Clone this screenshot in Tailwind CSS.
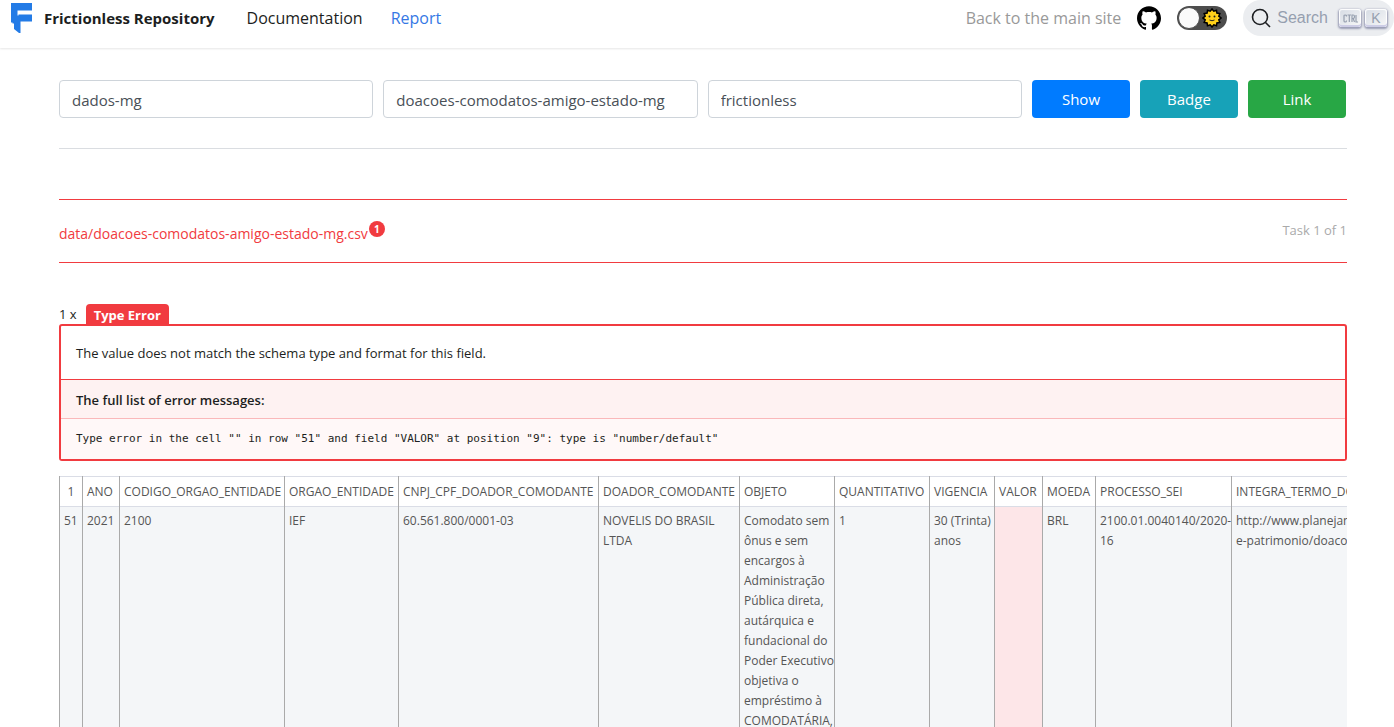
<!DOCTYPE html>
<html lang="en">
<head>
<meta charset="utf-8">
<meta name="viewport" content="width=device-width, initial-scale=1">
<title>Report | Frictionless Repository</title>
<script src="https://cdn.jsdelivr.net/npm/@tailwindcss/browser@4"></script>
</head>
<body class="bg-white font-['Segoe_UI','Open_Sans',sans-serif] text-[#1c1e21]">
<header class="flex h-12 items-center pb-3 pl-[10px] text-base shadow-[0_1px_2px_rgba(0,0,0,0.1)]">
  <a href="#" class="mr-8 flex items-center gap-3 text-[15px] font-bold">
    <svg class="h-[30px] w-[22px]" viewBox="0 0 22 30" fill="#237be6" aria-hidden="true"><path d="M1 0H22V7.500H7.500V12.500H8.500V11.500H22V18.500H10.500V30H9L4 26V20.500H2.500V19.500H1Z"/></svg>
    <span>Frictionless Repository</span>
  </a>
  <nav class="flex gap-7">
    <a href="#">Documentation</a>
    <a href="#" class="text-[#3578e5]">Report</a>
  </nav>
  <div class="ml-auto flex items-center">
    <a href="#" class="mr-4 text-[#999999]">Back to the main site</a>
    <a href="#" aria-label="GitHub" class="mr-4">
      <svg class="size-6" viewBox="0 0 24 24" fill="#000"><path d="M12 .297c-6.630 0-12 5.373-12 12 0 5.303 3.438 9.800 8.205 11.385.6.113.82-.258.82-.577 0-.285-.010-1.040-.015-2.040-3.338.724-4.042-1.610-4.042-1.610C4.422 18.070 3.633 17.700 3.633 17.700c-1.087-.744.084-.729.084-.729 1.205.084 1.838 1.236 1.838 1.236 1.070 1.835 2.809 1.305 3.495.998.108-.776.417-1.305.76-1.605-2.665-.3-5.466-1.332-5.466-5.930 0-1.310.465-2.380 1.235-3.220-.135-.303-.54-1.523.105-3.176 0 0 1.005-.322 3.300 1.230.96-.267 1.980-.399 3-.405 1.020.006 2.040.138 3 .405 2.280-1.552 3.285-1.230 3.285-1.230.645 1.653.24 2.873.12 3.176.765.84 1.230 1.910 1.230 3.220 0 4.610-2.805 5.625-5.475 5.920.42.36.81 1.096.81 2.220 0 1.606-.015 2.896-.015 3.286 0 .315.21.69.825.57C20.565 22.092 24 17.592 24 12.297c0-6.627-5.373-12-12-12"/></svg>
    </a>
    <button type="button" aria-label="Switch theme" class="mr-4 flex h-6 w-[50px] items-center justify-between rounded-full bg-[#4d4d4d] px-px">
      <span class="size-[22px] rounded-full border border-[#4d4d4d] bg-[#fafafa]"></span>
      <svg class="mr-1 size-5" viewBox="0 0 20 20" aria-hidden="true"><path d="M10 1L11.800 3.200L14.500 2.200L14.900 5.100L17.800 5.500L16.800 8.200L19 10L16.800 11.800L17.800 14.500L14.900 14.900L14.500 17.800L11.800 16.800L10 19L8.200 16.800L5.500 17.800L5.100 14.900L2.200 14.500L3.200 11.800L1 10L3.200 8.200L2.200 5.500L5.100 5.100L5.500 2.200L8.200 3.200Z" fill="#ffd11a" stroke="#000" stroke-width="1.500"/><circle cx="7.500" cy="8.500" r="1" fill="#222"/><circle cx="12.500" cy="8.500" r="1" fill="#222"/><path d="M7.500 12q2.500 1.500 5 0" fill="none" stroke="#222"/></svg>
    </button>
    <button type="button" class="flex h-9 items-center rounded-full bg-[#ebedf0] pl-2 pr-[7px] font-['Liberation_Sans',sans-serif] text-base text-[#969faf]">
      <svg class="mr-[6px] size-5" viewBox="0 0 20 20" fill="none" stroke="#1c1e21" stroke-width="1.600" aria-hidden="true"><circle cx="9" cy="9" r="7.500"/><path d="M14.500 14.500L19 19"/></svg>
      <span class="mr-[11px]">Search</span>
      <span class="flex gap-1">
        <kbd class="flex h-[18px] w-[22px] items-center justify-center rounded-[3px] bg-gradient-to-br from-[#d5dbe4] to-[#f8f8f8] shadow-[inset_0_-2px_0_#cdcde6,inset_0_0_1px_1px_#fff,0_1px_2px_1px_rgba(30,35,90,0.4)]"><svg class="h-[9px] w-[15px]" viewBox="0 0 15 9" fill="none" stroke="#969faf" stroke-width="1.200" role="img" aria-label="Ctrl"><path d="M3.500 2.500V2Q3.500 1 2.200 1T1 2V7Q1 8 2.200 8T3.500 7V6.500M4.500 1H8M6.300 1V8M9 8V1H10.200Q11.500 1 11.500 2.700T10.200 4.500H9M10.200 4.500L11.500 8M13 1V8H15"/></svg></kbd>
        <kbd class="flex h-[18px] w-[22px] items-center justify-center rounded-[3px] bg-gradient-to-br from-[#d5dbe4] to-[#f8f8f8] font-['Liberation_Sans',sans-serif] text-sm shadow-[inset_0_-2px_0_#cdcde6,inset_0_0_1px_1px_#fff,0_1px_2px_1px_rgba(30,35,90,0.4)]">K</kbd>
      </span>
    </button>
  </div>
</header>

<main class="pl-[59px] pr-[47px] pt-8">
  <form class="mr-px flex gap-[10px] text-[15px]" onsubmit="return false">
    <input aria-label="User" value="dados-mg" class="h-[38px] min-w-0 flex-1 rounded border border-[#ced4da] px-3 pt-[2px] text-[#495057]">
    <input aria-label="Repository" value="doacoes-comodatos-amigo-estado-mg" class="h-[38px] min-w-0 flex-1 rounded border border-[#ced4da] px-3 pt-[2px] text-[#495057]">
    <input aria-label="Workflow" value="frictionless" class="h-[38px] min-w-0 flex-1 rounded border border-[#ced4da] px-3 pt-[2px] text-[#495057]">
    <button type="submit" class="w-[98px] rounded bg-[#007bff] text-white">Show</button>
    <button type="button" class="w-[98px] rounded bg-[#17a2b8] text-white">Badge</button>
    <button type="button" class="w-[98px] rounded bg-[#28a745] text-white">Link</button>
  </form>
  <hr class="mt-[30px] border-[#dadde1]">

  <section class="mt-[50px]">
    <div class="flex h-16 items-center justify-between border-y border-[#f13b40] text-[13px]">
      <h2 class="flex items-center gap-px text-[14px] font-medium text-[#f13b40]"><a href="#" class="pt-1">data/doacoes-comodatos-amigo-estado-mg.csv</a>
        <span class="mb-1 flex size-4 items-center justify-center rounded-full bg-[#f13b40] text-[10px] font-bold text-white">1</span></h2>
      <span class="text-[#aaaaaa]">Task 1 of 1</span>
    </div>

    <div class="mt-[41px] flex h-5 items-center text-[13px]">
      <span class="mr-[9px] pt-[2px]">1 x</span>
      <span class="flex h-full items-center rounded-t bg-[#f13b40] px-2 pt-[3px] font-bold text-white">Type Error</span>
    </div>
    <div class="rounded-[3px] border-2 border-[#f13b40] text-[13px]">
      <p class="flex h-[53px] items-center px-[15px] pt-[2px]">The value does not match the schema type and format for this field.</p>
      <h3 class="flex h-[39px] items-center border-t border-[#f13b40] bg-[#fef2f2] px-[15px] pt-[3px] font-semibold">The full list of error messages:</h3>
      <p class="flex h-[41px] items-center border-t border-[#fab8ba] bg-[#fff8f8] px-[15px] font-['DejaVu_Sans_Mono',monospace] text-[11px]">Type error in the cell "" in row "51" and field "VALOR" at position "9": type is "number/default"</p>
    </div>

    <div class="mt-[15px] overflow-x-auto">
      <table class="w-[1590px] table-fixed border-collapse text-left align-top text-[12px] leading-5 text-[#555555]">
        <colgroup><col class="w-[23px]"><col class="w-[37px]"><col class="w-[165px]"><col class="w-[114px]"><col class="w-[200px]"><col class="w-[141px]"><col class="w-[95px]"><col class="w-[95px]"><col class="w-[65px]"><col class="w-[48px]"><col class="w-[53px]"><col class="w-[136px]"><col></colgroup>
        <thead>
          <tr class="h-[30px] border-y border-[#dadde6] [&>th]:border-x [&>th]:border-x-[#aaaaaa] [&>th]:px-1 [&>th]:font-medium">
            <th class="text-center">1</th><th>ANO</th><th>CODIGO_ORGAO_ENTIDADE</th><th>ORGAO_ENTIDADE</th><th>CNPJ_CPF_DOADOR_COMODANTE</th><th>DOADOR_COMODANTE</th><th>OBJETO</th><th>QUANTITATIVO</th><th>VIGENCIA</th><th>VALOR</th><th>MOEDA</th><th>PROCESSO_SEI</th><th>INTEGRA_TERMO_DOACAO_COMODATO</th>
          </tr>
        </thead>
        <tbody>
          <tr class="whitespace-nowrap bg-[#f4f6f8] align-top [&>td]:border-x [&>td]:border-x-[#aaaaaa] [&>td]:pl-1 [&>td]:pb-8 [&>td]:pt-1">
            <td>51</td><td>2021</td><td>2100</td><td>IEF</td><td>60.561.800/0001-03</td><td>NOVELIS DO BRASIL<br>LTDA</td><td>Comodato sem<br>ônus e sem<br>encargos à<br>Administração<br>Pública direta,<br>autárquica e<br>fundacional do<br>Poder Executivo<br>objetiva o<br>empréstimo à<br>COMODATÁRIA,</td><td>1</td><td>30 (Trinta)<br>anos</td><td class="bg-[#fde6e8]"></td><td>BRL</td><td>2100.01.0040140/2020-<br>16</td><td>http://www.planejamento.mg.gov.br/logistica-<br>e-patrimonio/doacoes-e-comodatos</td>
          </tr>
        </tbody>
      </table>
    </div>
  </section>
</main>
</body>
</html>
